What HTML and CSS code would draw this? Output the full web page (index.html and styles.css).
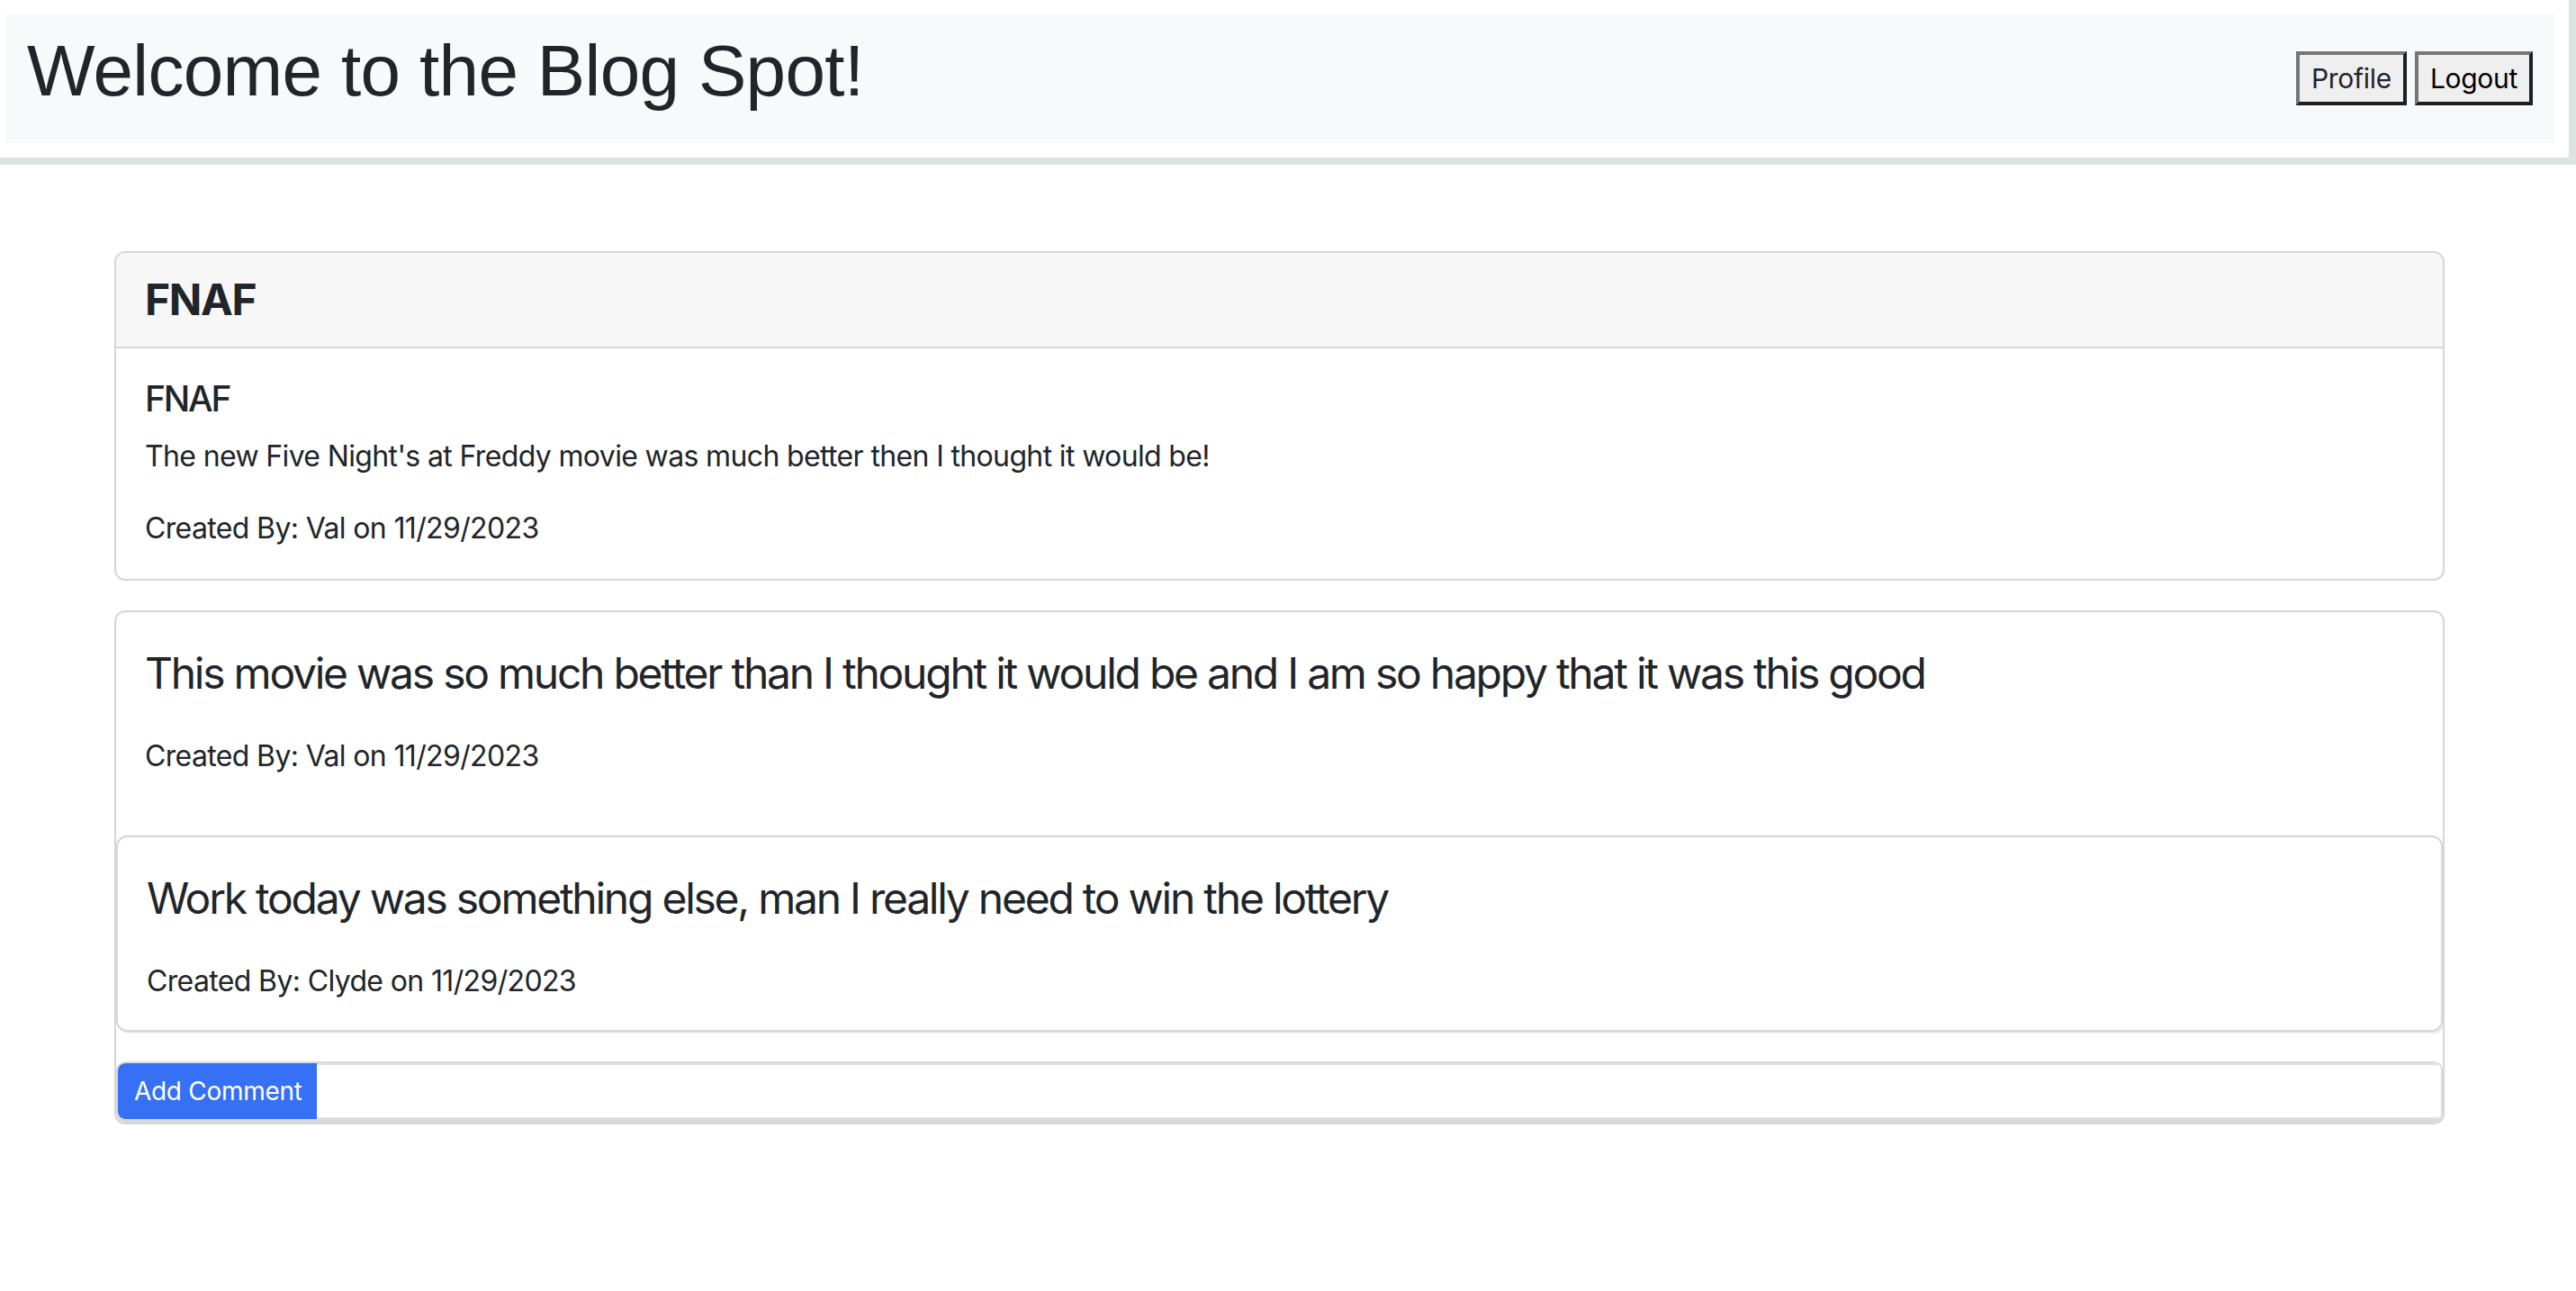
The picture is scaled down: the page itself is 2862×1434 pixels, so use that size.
FILE: index.html
```html
<!DOCTYPE html>
<html lang="en">
<head>
<meta charset="utf-8">
<title>Blog Spot</title>
<link rel="stylesheet" href="styles.css">
</head>
<body>
<div class="topwrap">
  <nav class="navbar">
    <h1 class="brand">Welcome to the Blog Spot!</h1>
    <div class="navbtns">
      <button class="navbtn navbtn-profile">Profile</button>
      <button class="navbtn">Logout</button>
    </div>
  </nav>
</div>

<main class="main">
  <section class="card">
    <div class="card-header"><h4 class="card-header-title">FNAF</h4></div>
    <div class="card-body">
      <h5 class="post-title">FNAF</h5>
      <p class="post-text">The new Five Night's at Freddy movie was much better then I thought it would be!</p>
      <p class="meta meta-last">Created By: Val on 11/29/2023</p>
    </div>
  </section>

  <section class="card card-comments">
    <div class="comment">
      <p class="comment-text">This movie was so much better than I thought it would be and I am so happy that it was this good</p>
      <p class="meta">Created By: Val on 11/29/2023</p>
    </div>
    <div class="comment comment-card">
      <p class="comment-text">Work today was something else, man I really need to win the lottery</p>
      <p class="meta meta-last">Created By: Clyde on 11/29/2023</p>
    </div>
    <form class="comment-form">
      <button type="button" class="btn-add">Add Comment</button>
      <input class="comment-input" type="text" aria-label="comment">
    </form>
  </section>
</main>
</body>
</html>
```

FILE: styles.css
```css
* { box-sizing: border-box; }

html, body {
  margin: 0;
  padding: 0;
  background: #ffffff;
}

body {
  font-family: Inter, "Noto Sans", "Liberation Sans", sans-serif;
  color: #212529;
  font-size: 32px;
  line-height: 1.5;
  letter-spacing: -0.64px;
}

.topwrap {
  width: 2862px;
  padding: 15px 16px 16px 6px;
  border-right: 8px solid #dee2e6;
  border-bottom: 8px solid #dee2e6;
}

.navbar {
  background: #f8f9fa;
  display: flex;
  align-items: center;
  justify-content: space-between;
  padding: 16px 24px 16px 24px;
  height: 144px;
}

.brand {
  margin: 0 0 16px 0;
  font-family: "Liberation Sans", Arial, sans-serif;
  font-weight: 400;
  font-size: 80px;
  line-height: 1.2;
  letter-spacing: -0.65px;
  color: #212529;
}

.navbtns {
  display: flex;
  gap: 9px;
  align-items: center;
}

.navbtn {
  font-family: Inter, "Noto Sans", sans-serif;
  font-size: 30px;
  line-height: 36px;
  letter-spacing: -0.3px;
  padding: 8px 13px;
  background: #efefef;
  color: #000000;
  border-width: 4px;
  border-style: solid;
  border-color: #767676 #1f1f1f #1f1f1f #767676;
  border-radius: 0;
  height: 60px;
}

.navbtn-profile { color: #212529; }

.main {
  padding: 96px 0 0 127px;
}

.card {
  width: 2589px;
  border: 2px solid #d6d6d6;
  border-radius: 12px;
  background: #fff;
}

.card-header {
  background: #f7f7f7;
  border-bottom: 2px solid #d6d6d6;
  padding: 23px 32px;
  border-radius: 10px 10px 0 0;
}

.card-header-title {
  margin: 0;
  font-size: 48px;
  font-weight: 700;
  line-height: 1.2;
  letter-spacing: -1.4px;
}

.card-body {
  padding: 32px;
}

.post-title {
  margin: 0 0 16px 0;
  font-size: 39px;
  font-weight: 500;
  line-height: 48px;
  letter-spacing: -2.2px;
}

.post-text {
  margin: 0 0 32px 0;
}

.meta {
  margin: 0 0 32px 0;
}

.meta-last { margin-bottom: 0; }

.card-comments {
  margin-top: 33px;
  overflow: hidden;
}

.comment {
  padding: 32px;
}

.comment-text {
  margin: 0 0 32px 0;
  font-size: 48px;
  line-height: 1.5;
  letter-spacing: -2.25px;
}

.comment-card {
  border: 2px solid #d6d6d6;
  border-radius: 12px;
  box-shadow: 2px 2px 1px rgba(0,0,0,0.08);
  padding: 32px 32px 30px 32px;
  margin-bottom: 33px;
}

.comment-form {
  display: flex;
  margin: 0;
  border: 2px solid #d9d9d9;
  border-bottom-width: 4px;
  border-radius: 10px;
  overflow: hidden;
}

.btn-add {
  font-family: Inter, "Noto Sans", sans-serif;
  font-size: 28px;
  line-height: 1.5;
  letter-spacing: -0.3px;
  padding: 8px 16px;
  background: #3570f5;
  color: #ffffff;
  border: 2px solid #3570f5;
  border-radius: 8px 0 0 8px;
  width: 221px;
  height: 62px;
  white-space: nowrap;
}

.comment-input {
  flex: 1;
  border: 0;
  border-top: 2px solid #dee2e6;
  border-bottom: 2px solid #dee2e6;
  background: #fff;
  font-size: 28px;
  outline: none;
}
```
